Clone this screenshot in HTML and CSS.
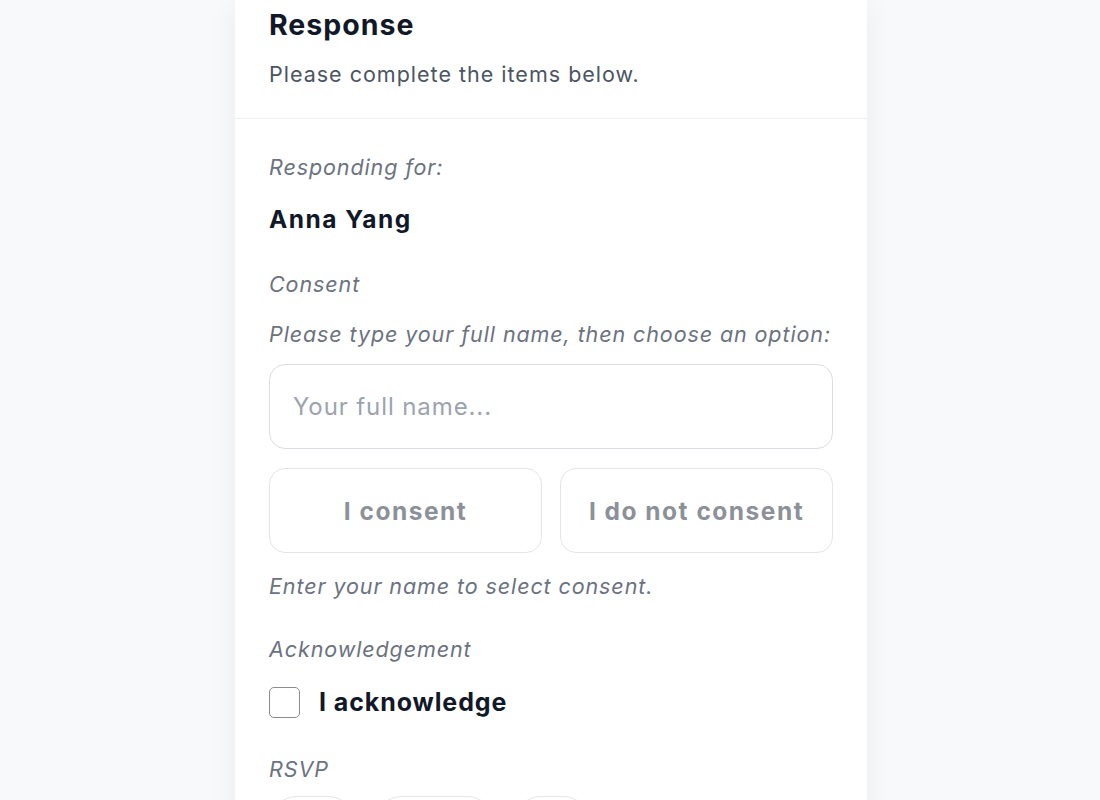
FILE: index.html
```html
<!DOCTYPE html>
<html lang="en">
  <head>
    <meta charset="UTF-8" />
    <title>Response</title>
    <link rel="stylesheet" href="styles.css">
  </head>
  <body>
    <div class="card">
      <header class="card-head">
        <h1>Response</h1>
        <p class="subtitle">Please complete the items below.</p>
      </header>

      <div class="card-body">
        <section class="field">
          <p class="label">Responding for:</p>
          <p class="person">Anna Yang</p>
        </section>

        <section class="field">
          <p class="label">Consent</p>
          <p class="label hint">Please type your full name, then choose an option:</p>
          <input type="text" class="name-input" placeholder="Your full name..." />
          <div class="choice-row">
            <button type="button" class="choice" disabled>I consent</button>
            <button type="button" class="choice" disabled>I do not consent</button>
          </div>
          <p class="label note">Enter your name to select consent.</p>
        </section>

        <section class="field">
          <p class="label">Acknowledgement</p>
          <label class="check-row">
            <input type="checkbox" class="check" />
            <span>I acknowledge</span>
          </label>
        </section>

        <section class="field rsvp">
          <p class="label">RSVP</p>
          <div class="pill-row">
            <button type="button" class="pill">Yes</button>
            <button type="button" class="pill">Maybe</button>
            <button type="button" class="pill">No</button>
          </div>
        </section>
      </div>
    </div>
  </body>
</html>
```

FILE: styles.css
```css
body {
  margin: 0;
  padding-left: 2px;
  background-color: #f8f9fb;
  font-family: Inter, "Noto Sans", sans-serif;
  color: #111827;
  overflow: hidden;
}

.card {
  width: 632px;
  margin: 0 auto;
  background-color: #fff;
  box-shadow: 0 4px 28px rgba(17, 24, 39, 0.06);
  min-height: 900px;
}

.card-head {
  padding: 8px 34px 30px;
  border-bottom: 1.5px solid #eef0f3;
}

h1 {
  margin: 0;
  font-size: 28.5px;
  line-height: 34px;
  font-weight: 700;
  letter-spacing: 1px;
  color: #111827;
}

.subtitle {
  margin: 18px 0 0;
  font-size: 21.5px;
  line-height: 28px;
  letter-spacing: 1px;
  color: #4b5563;
}

.card-body {
  padding: 34px 34px 0;
  display: flex;
  flex-direction: column;
  gap: 35px;
}

.field {
  display: flex;
  flex-direction: column;
}

.rsvp {
  margin-top: 2px;
}

.label {
  margin: 0;
  font-size: 21.5px;
  line-height: 28px;
  font-style: italic;
  letter-spacing: 0.9px;
  color: #6b7280;
}

.person {
  margin: 22px 0 0;
  font-size: 24.5px;
  line-height: 32px;
  font-weight: 700;
  letter-spacing: 1.5px;
}

.hint {
  margin-top: 22px;
}

.name-input {
  margin-top: 16px;
  height: 85px;
  box-sizing: border-box;
  padding: 0 23px;
  border: 1.5px solid #dadde2;
  border-radius: 16px;
  font-family: inherit;
  font-size: 24px;
  letter-spacing: 0.9px;
  color: #111827;
  outline: none;
}

.name-input::placeholder {
  color: #9ca3af;
}

.choice-row {
  margin-top: 19px;
  display: grid;
  grid-template-columns: 1fr 1fr;
  gap: 18px;
}

.choice {
  height: 85px;
  border: 1.5px solid #e3e5e9;
  border-radius: 16px;
  background-color: #fff;
  font-family: inherit;
  font-size: 24.5px;
  font-weight: 700;
  letter-spacing: 1.5px;
  color: #8c9099;
}

.note {
  margin-top: 19px;
}

.check-row {
  margin-top: 23px;
  display: flex;
  align-items: center;
  gap: 19px;
  font-size: 25px;
  line-height: 32px;
  font-weight: 700;
  letter-spacing: 0.9px;
}

.check {
  appearance: none;
  margin: 0;
  width: 31px;
  height: 31px;
  border: 1.5px solid #8a8c90;
  border-radius: 5px;
  background-color: #fff;
}

.pill-row {
  margin-top: 13px;
  display: flex;
  gap: 18px;
}

.pill {
  padding: 14px 22px;
  border: 1.5px solid #e3e5e9;
  border-radius: 999px;
  background-color: #fff;
  font-family: inherit;
  font-size: 22px;
  letter-spacing: 1px;
  color: #374151;
}
```
